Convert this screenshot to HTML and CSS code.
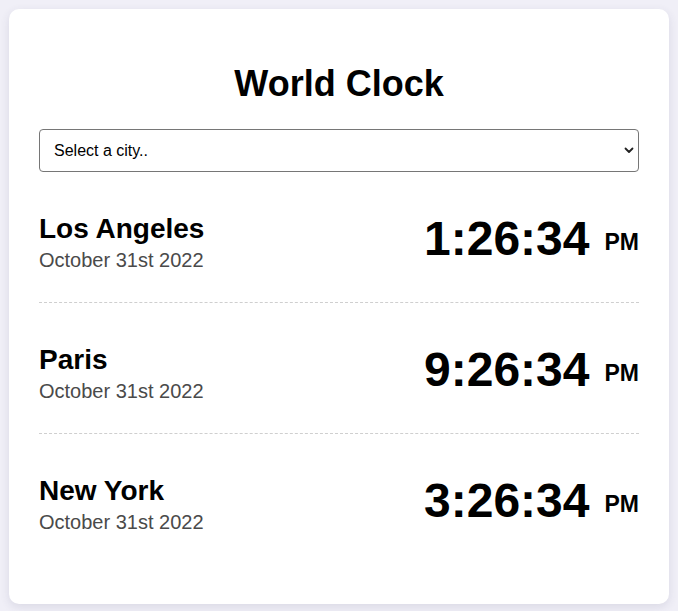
FILE: index.html
```html
<!DOCTYPE html>
<html lang="en">
<head>
<meta charset="utf-8">
<title>World Clock</title>
<link rel="stylesheet" href="styles.css">
</head>
<body>
<main class="card">
  <h1 class="title">World Clock</h1>
  <div class="select-wrap">
    <select class="city-select">
      <option>Select a city..</option>
      <option>Los Angeles</option>
      <option>Paris</option>
      <option>New York</option>
    </select>
    <svg class="chevron" width="10" height="7" viewBox="0 0 10 7" aria-hidden="true"><path d="M1.5 1.5 L5 5 L8.5 1.5" fill="none" stroke="#222" stroke-width="1.8" stroke-linecap="round" stroke-linejoin="round"/></svg>
  </div>
  <div class="clocks">
    <div class="clock-row">
      <div class="place">
        <div class="city">Los Angeles</div>
        <div class="date">October 31st 2022</div>
      </div>
      <div class="time">1:26:34<span class="ampm">PM</span></div>
    </div>
    <div class="clock-row">
      <div class="place">
        <div class="city">Paris</div>
        <div class="date">October 31st 2022</div>
      </div>
      <div class="time">9:26:34<span class="ampm">PM</span></div>
    </div>
    <div class="clock-row">
      <div class="place">
        <div class="city">New York</div>
        <div class="date">October 31st 2022</div>
      </div>
      <div class="time">3:26:34<span class="ampm">PM</span></div>
    </div>
  </div>
</main>
</body>
</html>
```
FILE: styles.css
```css
* { box-sizing: border-box; }

html, body {
  margin: 0;
  padding: 0;
}

body {
  background: #f0eff7;
  font-family: "Liberation Sans", Arial, Helvetica, sans-serif;
  color: #000;
  padding: 9px;
}

.card {
  display: block;
  background: #fff;
  border-radius: 10px;
  box-shadow: 0 3px 10px rgba(60, 55, 100, 0.12);
  padding: 30px 30px 40px;
}

.title {
  font-size: 36px;
  font-weight: 700;
  text-align: center;
  margin: 24px 0 24px;
  line-height: normal;
}

.select-wrap {
  position: relative;
}

.city-select {
  -webkit-appearance: none;
  appearance: none;
  display: block;
  width: 100%;
  height: 43px;
  border: 1px solid #767676;
  border-radius: 4px;
  background: #fff;
  padding: 0 30px 0 14px;
  font-family: "Liberation Sans", Arial, Helvetica, sans-serif;
  font-size: 16px;
  color: #000;
  margin: 0;
}

.chevron {
  position: absolute;
  right: 5px;
  top: 18px;
  pointer-events: none;
}

.clock-row {
  display: flex;
  justify-content: space-between;
  align-items: flex-start;
  padding: 41px 0 30px;
  border-bottom: 1px dashed #cfcfcf;
}

.clock-row:last-child {
  border-bottom: none;
}

.city {
  font-size: 28px;
  font-weight: 700;
  line-height: 32px;
}

.date {
  font-size: 20px;
  line-height: 23px;
  margin-top: 4px;
  color: #4a4a4a;
}

.time {
  font-size: 48px;
  font-weight: 700;
  line-height: 48px;
  margin-top: 2px;
  white-space: nowrap;
}

.ampm {
  font-size: 23px;
  line-height: 1;
  margin-left: 15px;
  vertical-align: 5px;
}
```
